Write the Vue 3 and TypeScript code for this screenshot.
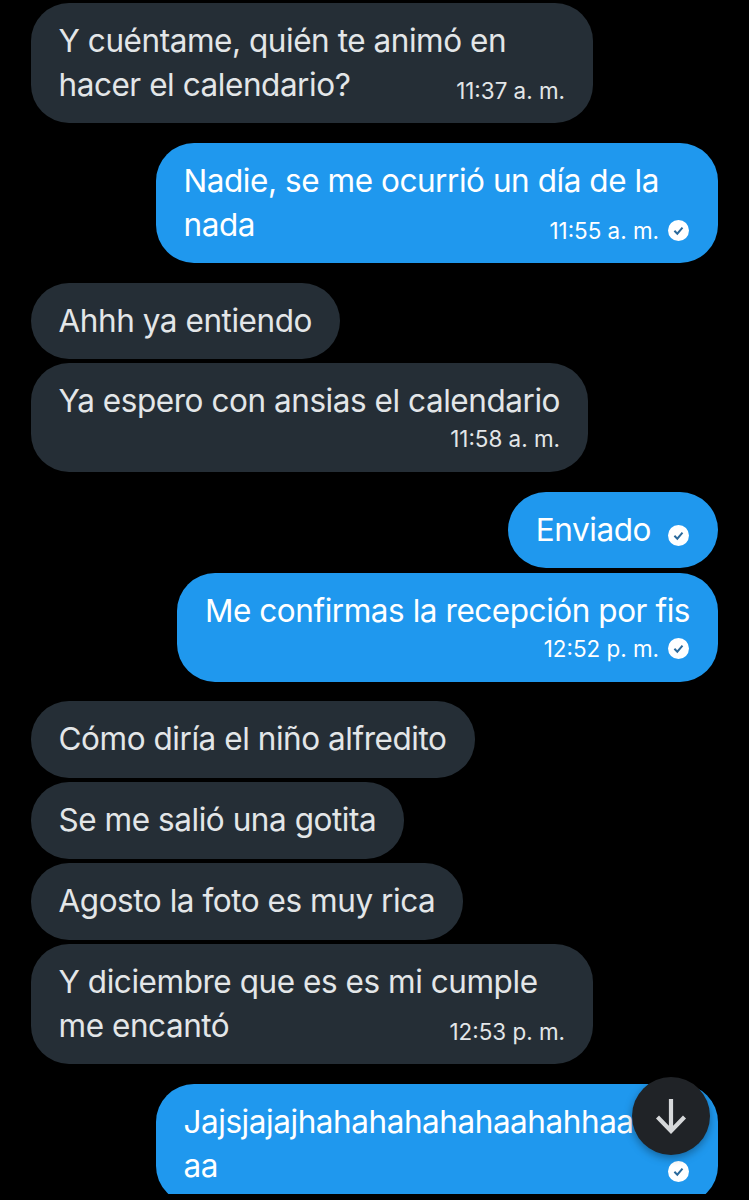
<script setup lang="ts">
interface Msg {
  id: number
  mine: boolean
  lines: string[]
  time?: string
  check?: boolean
  own?: boolean
  wide?: boolean
  gap: number
}
const messages: Msg[] = [
  { id: 1, mine: false, lines: ['Y cuéntame, quién te animó en', 'hacer el calendario?'], time: '11:37 a. m.', wide: true, gap: 0 },
  { id: 2, mine: true, lines: ['Nadie, se me ocurrió un día de la', 'nada'], time: '11:55 a. m.', check: true, wide: true, gap: 20 },
  { id: 3, mine: false, lines: ['Ahhh ya entiendo'], gap: 19.5 },
  { id: 4, mine: false, lines: ['Ya espero con ansias el calendario'], time: '11:58 a. m.', own: true, gap: 4 },
  { id: 5, mine: true, lines: ['Enviado'], check: true, gap: 20 },
  { id: 6, mine: true, lines: ['Me confirmas la recepción por fis'], time: '12:52 p. m.', check: true, own: true, gap: 5 },
  { id: 7, mine: false, lines: ['Cómo diría el niño alfredito'], gap: 19.5 },
  { id: 8, mine: false, lines: ['Se me salió una gotita'], gap: 4.5 },
  { id: 9, mine: false, lines: ['Agosto la foto es muy rica'], gap: 4.5 },
  { id: 10, mine: false, lines: ['Y diciembre que es es mi cumple', 'me encantó'], time: '12:53 p. m.', wide: true, gap: 4.5 },
  { id: 11, mine: true, lines: ['Jajsjajajhahahahahahaahahhaahaha', 'aa'], check: true, wide: true, gap: 20 },
]
</script>

<template>
  <main class="chat">
    <div
      v-for="m in messages"
      :key="m.id"
      class="bubble"
      :class="{ mine: m.mine, wide: m.wide }"
      :style="{ marginTop: m.gap + 'px' }"
    >
      <div v-for="(line, i) in m.lines" :key="i" class="line">
        <span class="text">{{ line }}</span>
        <span v-if="i === m.lines.length - 1 && !m.own && (m.time || m.check)" class="meta">
          <span v-if="m.time">{{ m.time }}</span>
          <svg v-if="m.check" class="check" viewBox="0 0 21 21">
            <circle cx="10.5" cy="10.5" r="10.5" fill="#fff" />
            <path d="M6.4 10.8l2.9 2.9 5.2-6" fill="none" stroke="#2b6a9c" stroke-width="2" />
          </svg>
        </span>
      </div>
      <div v-if="m.own" class="meta own">
        <span>{{ m.time }}</span>
        <svg v-if="m.check" class="check" viewBox="0 0 21 21">
          <circle cx="10.5" cy="10.5" r="10.5" fill="#fff" />
          <path d="M6.4 10.8l2.9 2.9 5.2-6" fill="none" stroke="#2b6a9c" stroke-width="2" />
        </svg>
      </div>
    </div>
    <button class="down" type="button" aria-label="Bajar">
      <svg viewBox="0 0 32 36" width="32" height="36">
        <path d="M16 1v32M2.5 19L16 33l13.5-14" fill="none" stroke="#d6d8da" stroke-width="4.2" />
      </svg>
    </button>
  </main>
</template>

<style>
body {
  background: #000;
}
</style>

<style scoped>
.chat {
  position: relative;
  width: 749px;
  height: 1194px;
  overflow: hidden;
  background: #000;
  box-sizing: border-box;
  padding: 3px 31px 0;
  display: flex;
  flex-direction: column;
  align-items: flex-start;
  font-family: Inter, Roboto, sans-serif;
}
.bubble {
  box-sizing: border-box;
  flex: none;
  max-width: 562px;
  padding: 16px 28px 17px 27.5px;
  border-radius: 38px;
  background: #252e36;
  color: #e3e6e8;
  font-size: 31.5px;
  letter-spacing: -0.45px;
  line-height: 43.5px;
  overflow: hidden;
}
.bubble.mine {
  align-self: flex-end;
  background: #1f98ee;
  color: #fff;
}
.bubble.wide {
  width: 562px;
}
.line {
  display: flex;
  justify-content: space-between;
  white-space: nowrap;
}
.meta {
  display: inline-flex;
  align-items: center;
  justify-content: flex-end;
  gap: 9px;
  font-size: 22.4px;
  letter-spacing: 0;
  line-height: 32px;
  margin-top: 13px;
  height: 30.5px;
  margin-left: 17px;
}
.meta.own {
  display: flex;
  margin-top: 0;
  height: 32px;
  margin-left: 0;
}
.mine .meta {
  margin-right: 1px;
}
.check {
  width: 21px;
  height: 21px;
  flex: none;
}
.down {
  position: absolute;
  left: 632px;
  top: 1077px;
  width: 78px;
  height: 78px;
  padding: 0;
  border: none;
  border-radius: 50%;
  background: #202327;
  box-shadow: 0 3px 8px rgba(0, 0, 0, 0.35);
  display: flex;
  align-items: center;
  justify-content: center;
}
</style>
